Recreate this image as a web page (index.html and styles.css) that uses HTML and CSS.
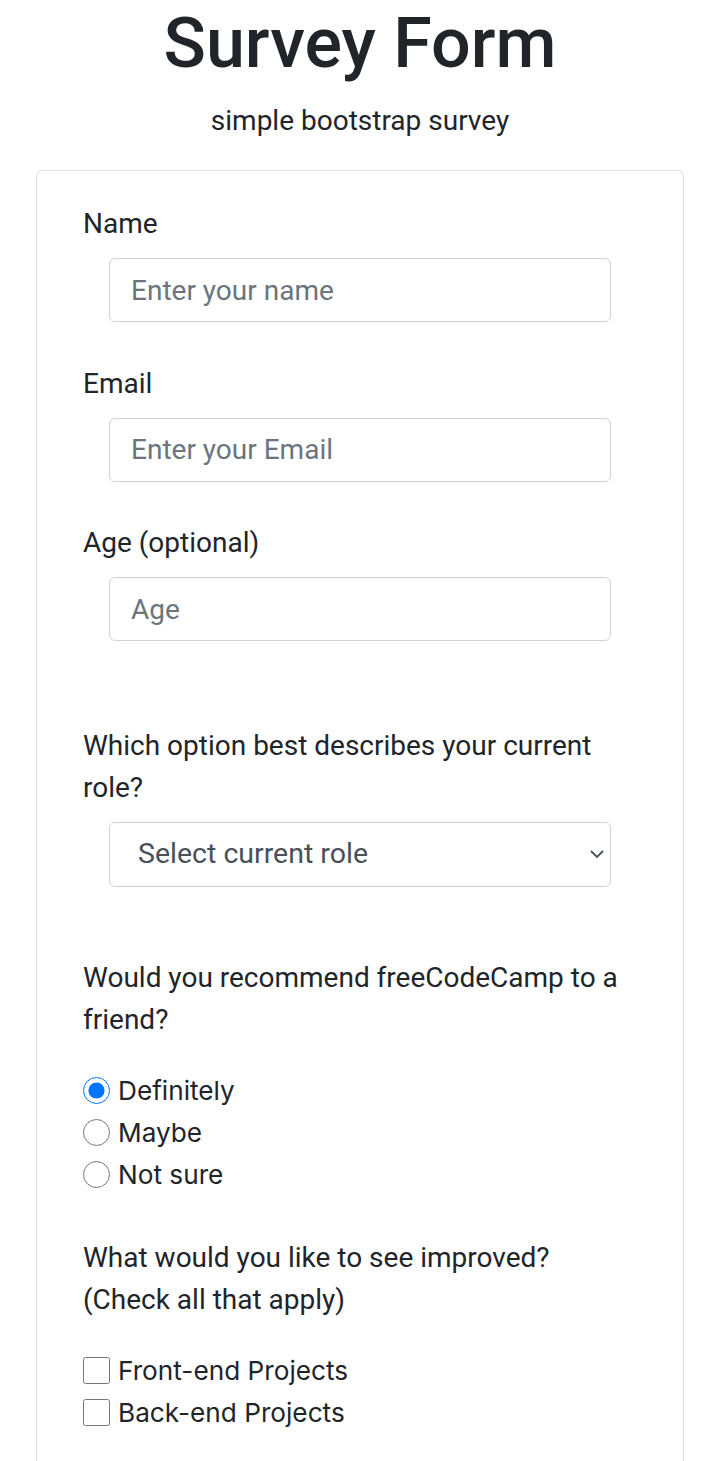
FILE: index.html
```html
<!DOCTYPE html>
<html lang="en">
<head>
<meta charset="utf-8">
<title>Survey Form</title>
<link rel="stylesheet" href="styles.css">
</head>
<body>
<header class="hero">
  <h1 class="title">Survey Form</h1>
  <p class="subtitle">simple bootstrap survey</p>
</header>
<main class="card">
  <form class="form">
    <div class="group">
      <label class="label" for="name">Name</label>
      <input class="control" id="name" type="text" placeholder="Enter your name">
    </div>
    <div class="group">
      <label class="label" for="email">Email</label>
      <input class="control" id="email" type="email" placeholder="Enter your Email">
    </div>
    <div class="group">
      <label class="label" for="age">Age (optional)</label>
      <input class="control" id="age" type="number" placeholder="Age">
    </div>
    <div class="group group-select">
      <label class="label" for="role">Which option best describes your current role?</label>
      <div class="select">
        <span class="select-text">Select current role</span>
        <svg class="chevron" width="16" height="10" viewBox="0 0 16 10"><path d="M2 2 L8 8 L14 2" fill="none" stroke="#495057" stroke-width="1.8"/></svg>
      </div>
    </div>
    <div class="group group-radio">
      <p class="label">Would you recommend freeCodeCamp to a friend?</p>
      <div class="choices">
        <label class="choice"><input type="radio" name="rec" checked><span>Definitely</span></label>
        <label class="choice"><input type="radio" name="rec"><span>Maybe</span></label>
        <label class="choice"><input type="radio" name="rec"><span>Not sure</span></label>
      </div>
    </div>
    <div class="group group-check">
      <p class="label">What would you like to see improved? (Check all that apply)</p>
      <div class="choices">
        <label class="choice"><input type="checkbox"><span>Front-end Projects</span></label>
        <label class="choice"><input type="checkbox"><span>Back-end Projects</span></label>
      </div>
    </div>
  </form>
</main>
</body>
</html>
```
FILE: styles.css
```css
* { box-sizing: border-box; }
html, body { margin: 0; padding: 0; }
body {
  background: #fff;
  color: #212529;
  font-family: Roboto, "Liberation Sans", sans-serif;
  font-size: 28px;
  line-height: 42px;
}
.hero {
  text-align: center;
}
.title {
  margin: 0;
  font-size: 70px;
  font-weight: 500;
  line-height: 86px;
}
.subtitle {
  margin: 14px 0 0;
  font-size: 28px;
  line-height: 42px;
}
.card {
  margin: 28px 36px 0;
  border: 1px solid #dfdfdf;
  border-bottom: none;
  border-radius: 6px 6px 0 0;
  padding: 32px 46px 40px;
}
.form {
  display: flex;
  flex-direction: column;
}
.group {
  display: flex;
  flex-direction: column;
  margin-bottom: 40.5px;
}
.group-select { margin-top: 43px; margin-bottom: 70px; }
.group-radio { margin-bottom: 41px; }
.label {
  margin: 0 0 13px;
  display: block;
}
.group-radio .label, .group-check .label { margin-bottom: 29px; }
.control, .select {
  margin: 0 26px;
  height: 64px;
  border: 1px solid #ced4da;
  border-radius: 6px;
  padding: 0 21px;
  font-family: Roboto, "Liberation Sans", sans-serif;
  font-size: 28px;
  color: #495057;
  background: #fff;
  outline: none;
}
.control::placeholder { color: #6c757d; }
.select {
  height: 65px;
  display: flex;
  align-items: center;
  justify-content: space-between;
  padding: 0 5px 0 28px;
  font-size: 28.5px;
}
.chevron { display: block; }
.choices { display: flex; flex-direction: column; }
.choice {
  display: flex;
  align-items: center;
  height: 42px;
  font-family: Inter, Roboto, sans-serif;
  font-size: 26.2px;
}
.choice input {
  width: 27px;
  height: 27px;
  margin: 0 8px 0 0;
  accent-color: #0075ff;
}
```
